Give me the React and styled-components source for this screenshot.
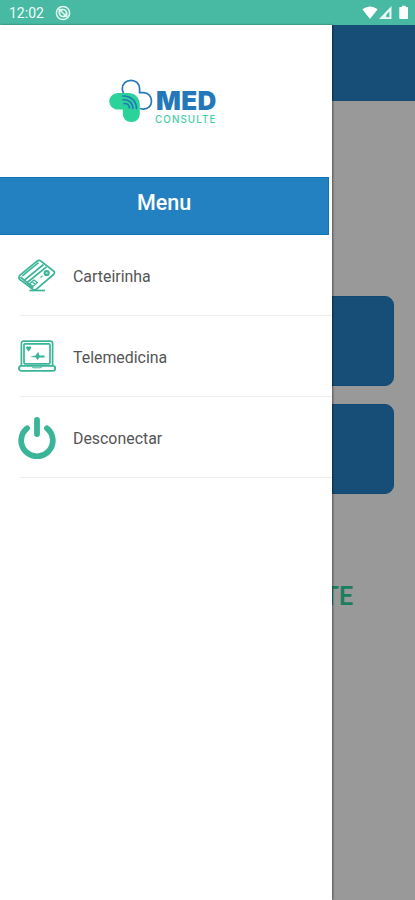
import styled, { createGlobalStyle } from "styled-components";

const menuItems = [
    { label: "Carteirinha", Icon: CardIcon },
    { label: "Telemedicina", Icon: LaptopIcon },
    { label: "Desconectar", Icon: PowerIcon },
];

const App = () => {
    return (
        <>
            <GlobalStyle />
            <Screen>
                <StatusBar>
                    <Clock>12:02</Clock>
                    <SyncIcon />
                    <Spacer />
                    <SystemIcons />
                </StatusBar>
                <Content>
                    <Home>
                        <HomeHeader />
                        <HomeButtons>
                            <HomeButton />
                            <HomeButton />
                        </HomeButtons>
                        <HomeTitle>MED CONSULTE</HomeTitle>
                    </Home>
                    <Backdrop />
                    <Drawer>
                        <LogoArea>
                            <LogoMark />
                            <LogoText>
                                <LogoName>MED</LogoName>
                                <LogoSub>CONSULTE</LogoSub>
                            </LogoText>
                        </LogoArea>
                        <MenuHeader>Menu</MenuHeader>
                        <MenuList>
                            {menuItems.map(({ label, Icon }) => (
                                <MenuItem key={label}>
                                    <Icon />
                                    <MenuLabel>{label}</MenuLabel>
                                </MenuItem>
                            ))}
                        </MenuList>
                    </Drawer>
                </Content>
            </Screen>
        </>
    );
};

export default App;

function SyncIcon() {
    return (
        <svg width="16" height="16" viewBox="0 0 16 16" fill="none" stroke="#e4f8f2">
            <circle cx="8" cy="8" r="6.6" strokeWidth="1.5" />
            <circle cx="8" cy="8" r="3.5" strokeWidth="1.7" />
            <path d="M4 4l8 8M4.2 8.2V4.5h3.6M11.8 7.8v3.7H8.2" strokeWidth="1.3" />
        </svg>
    );
}

function SystemIcons() {
    return (
        <svg width="48" height="16" viewBox="0 0 48 16" fill="#fff">
            <path d="M.3 4.2Q8-1 15.700 4.200L8 14Z" />
            <path d="M29.500 1V14H17Z" fill="#e9faf5" />
            <path d="M27.400 6.500V12.300H24.300V9.700Z" fill="#48b9a3" />
            <path d="M38 2h2V.8h3.600V2h1.700q.7 0 .7.7v10.600q0 .7-.7.7H38q-.7 0-.7-.7V2.700q0-.7.700-.7Z" />
        </svg>
    );
}

function LogoMark() {
    return (
        <svg width="44" height="46" viewBox="0 0 44 46" fill="none">
            <path
                d="M14.300 13.500C13.500 12.200 13.300 11 13.300 9.800C13.300 4.900 17.100 1.300 22 1.300C26.900 1.300 30.600 4.900 30.600 9.800V13.700H34.500C39.300 13.700 42.500 17.500 42.500 22C42.500 27 39 30.200 34.500 30.200C33.200 30.200 32.300 30 31.700 29.600"
                stroke="#2478b9"
                strokeWidth="1.700"
                strokeLinecap="round"
            />
            <path
                d="M9 13.900H19C26 13.900 30.800 18.500 30.800 25.500V34.500C30.800 39.500 27.400 43 22.400 43C17.500 43 13.800 39.500 13.800 34.500V30.600H9.500C4.300 30.600 .3 27 .3 22.300C.3 17.500 4.300 13.900 9 13.900Z"
                fill="#2bd39b"
            />
            <g stroke="#2478b9" strokeWidth="1.600" strokeLinecap="round">
                <path d="M13.800 17C21 16.500 27.500 21.500 27.500 29.500" />
                <path d="M14 20.800C19.800 20.300 23.900 24 23.900 29.500" />
                <path d="M15 24.600C18.500 24.300 20.400 26.300 20.400 29" />
            </g>
        </svg>
    );
}

function CardIcon() {
    return (
        <svg width="38" height="42" viewBox="0 0 38 42" fill="none" stroke="#3bb598" strokeWidth="1.700">
            <path d="M1.700 20.300L19 6.200Q21 4.500 23 6.200L35.500 16Q37.500 17.700 35.500 19.500L18.500 34.100Q16.500 35.800 14.500 34.100L2 24.700Q.1 23.100 1.700 20.300Z" />
            <path d="M4.300 20.800L20.500 7.700M6.200 25.300L25.500 9.500M9.200 27.500L28.500 11.800" strokeWidth="1.700" />
            <path d="M2.500 22L15 33" />
            <path d="M11.500 35.500H27" strokeWidth="1.700" />
            <circle cx="28.700" cy="18" r="2.100" fill="#3bb598" fillOpacity=".4" strokeWidth="2" />
            <path d="M16 25l3.300 2.700-4.500 3.700-3.300-2.700ZM14.200 26.700l3.100 2.600" strokeWidth="1.300" />
            <path d="M22.500 22.500l2-1.700" strokeWidth="1.100" />
        </svg>
    );
}

function LaptopIcon() {
    return (
        <svg width="38" height="42" viewBox="0 0 38 42" fill="none" stroke="#3bb598" strokeWidth="1.700">
            <path d="M3.400 30V7.500Q3.400 5.200 5.700 5.200H32.300Q34.600 5.200 34.600 7.500V30" />
            <rect x="6" y="7.800" width="26" height="20" rx="1" />
            <rect x="1" y="29.900" width="36.200" height="5" rx="2.500" strokeWidth="1.900" />
            <path d="M14 30.200q.3 1.600 2 1.600h6q1.700 0 2-1.600" strokeWidth="1" />
            <path
                d="M10.700 15.500C8.500 13.600 7.800 12.400 8.200 11.100Q9.200 9.600 10.700 10.800Q12.500 9.600 13.200 11.300Q13.400 13.200 10.700 15.500Z"
                fill="#3bb598"
                stroke="none"
            />
            <path d="M12 20.700L17.500 19.500L20.300 15.800L21.500 19.400H26.500V21.500H21.500L19.500 24L18 21.600Z" fill="#3bb598" stroke="none" />
        </svg>
    );
}

function PowerIcon() {
    return (
        <svg width="38" height="42" viewBox="0 0 38 42" fill="none" stroke="#3bb598" strokeLinecap="round">
            <path d="M9.100 11.200A15.800 15.800 0 1 0 28.900 11.200" strokeWidth="5.800" />
            <path d="M19 3V17" strokeWidth="5.800" />
        </svg>
    );
}

const GlobalStyle = createGlobalStyle`
    * {
        box-sizing: border-box;
    }

    body {
        margin: 0;
        background: #fff;
        font-family: Roboto, "Liberation Sans", sans-serif;
    }
`;

const Screen = styled.div`
    width: 415px;
    height: 900px;
    display: flex;
    flex-direction: column;
    overflow: hidden;
`;

const StatusBar = styled.header`
    height: 24.5px;
    flex-shrink: 0;
    display: flex;
    align-items: center;
    padding: 1px 5px 0 9px;
    background: #48b9a3;
`;

const Clock = styled.span`
    width: 45.5px;
    color: #f0fffb;
    font-size: 14px;
    line-height: 16px;
`;

const Spacer = styled.div`
    flex: 1;
`;

const Content = styled.div`
    position: relative;
    flex: 1;
`;

const Home = styled.main`
    height: 100%;
    display: flex;
    flex-direction: column;
    background: #fff;
`;

const HomeHeader = styled.div`
    height: 76px;
    background: #2683c8;
`;

const HomeButtons = styled.div`
    display: flex;
    flex-direction: column;
    gap: 18px;
    padding: 195px 21px 0;
`;

const HomeButton = styled.div`
    height: 90px;
    border-radius: 9px;
    background: #2683c8;
    border: 1px solid #1b7bc0;
`;

const HomeTitle = styled.h1`
    margin: 87px 62px 0;
    color: #30d3a0;
    font-size: 25px;
    font-weight: 600;
    line-height: 32px;
    text-align: right;
`;

/* escurece a tela atrás do menu lateral */
const Backdrop = styled.div`
    position: absolute;
    inset: 0;
    background: rgba(0, 0, 0, 0.4);
`;

const Drawer = styled.nav`
    position: absolute;
    top: 0;
    bottom: 0;
    left: 0;
    width: 332.4px;
    background: #fff;
    box-shadow: 1px 0 2px rgba(0, 0, 0, 0.45);
`;

const LogoArea = styled.div`
    height: 152px;
    display: flex;
    align-items: flex-start;
    gap: 2px;
    padding: 54px 0 0 109px;
`;

const LogoText = styled.div`
    display: flex;
    flex-direction: column;
    padding-top: 5px;
`;

const LogoName = styled.span`
    padding-left: 1px;
    color: #2478b9;
    font-family: Inter, Roboto, sans-serif;
    font-size: 26px;
    font-weight: 900;
    line-height: 33px;
    letter-spacing: 0.3px;
`;

const LogoSub = styled.span`
    margin-top: -2px;
    color: #45cfa5;
    font-family: Inter, Roboto, sans-serif;
    font-size: 9.8px;
    font-weight: 500;
    line-height: 10px;
    letter-spacing: 1.1px;
`;

const MenuHeader = styled.div`
    width: 329px;
    height: 58px;
    padding-bottom: 5px;
    display: flex;
    justify-content: center;
    align-items: center;
    background: #2381c1;
    border: 1px solid #1074b9;
    border-left: none;
    color: #fff;
    font-size: 21.5px;
    font-weight: 500;
    line-height: 26px;
`;

const MenuList = styled.div`
    display: flex;
    flex-direction: column;
    padding-left: 20px;
`;

const MenuItem = styled.div`
    height: 81px;
    display: flex;
    align-items: center;
    gap: 17px;
    padding-top: 2px;
    border-bottom: 1px solid #ececec;

    svg {
        margin-left: -2px;
    }
`;

const MenuLabel = styled.span`
    padding-top: 2px;
    color: #555;
    font-size: 15.9px;
    line-height: 20px;
`;
